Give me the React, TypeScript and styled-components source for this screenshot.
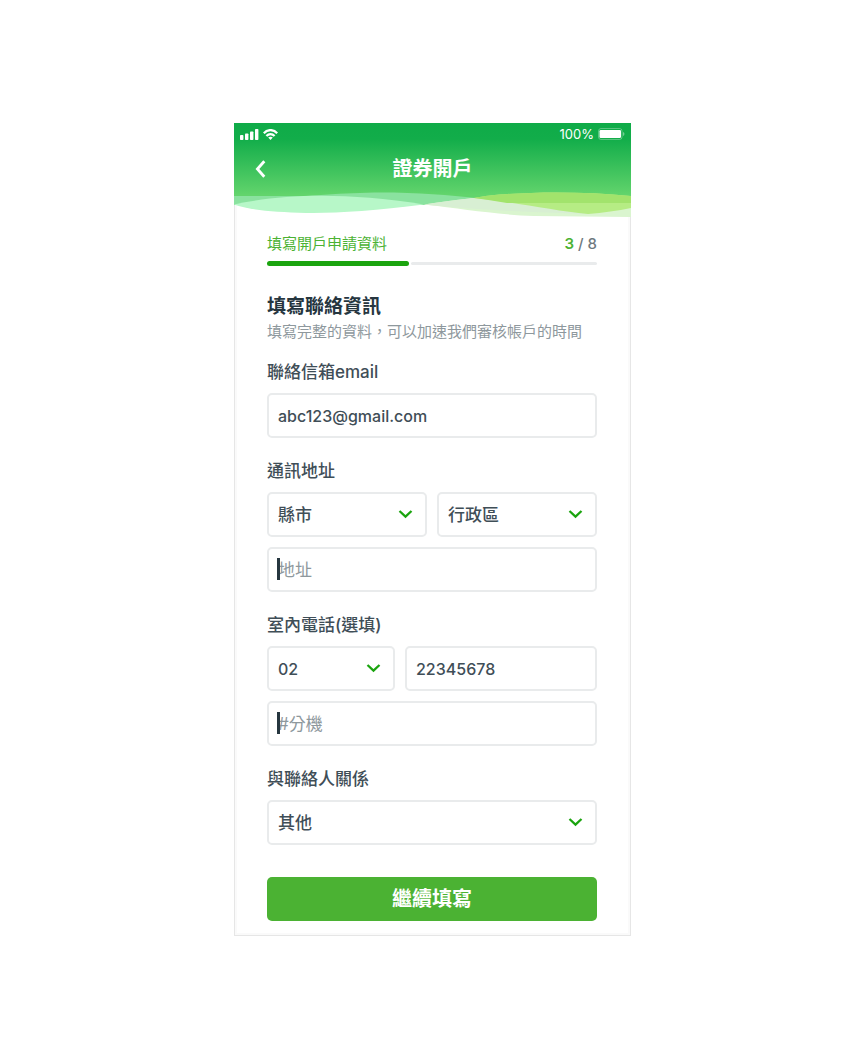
import React, { useId } from "react";
import styled, { createGlobalStyle } from "styled-components";

const color = {
  ink: "#3f4e57",
  inkDark: "#26363f",
  muted: "#8e989d",
  line: "#e9ebec",
  green: "#4bb233",
  greenDeep: "#1ba40f",
};

const GlobalStyle = createGlobalStyle`
  *, *::before, *::after { box-sizing: border-box; }
  body {
    margin: 0;
    background: #fff;
    color: ${color.ink};
    font-family: Inter, "Noto Sans CJK TC", sans-serif;
  }
`;

const Page = styled.div`
  display: flex;
  justify-content: center;
  padding: 123px 0 124px;
`;

const Phone = styled.div`
  width: 100%;
  max-width: 397px;
  background: #fff;
  box-shadow: inset 0 0 0 1px #e6e6e6, inset 0 0 0 3px #fafafa;
`;

const Header = styled.header`
  background: linear-gradient(#0fab48 0, #12ad4a 16px, #62d46c 72px, transparent 72px);
  color: #fff;
`;

const StatusBar = styled.div`
  display: flex;
  align-items: center;
  justify-content: space-between;
  height: 22px;
  padding: 0 6px;
`;

const StatusGroup = styled.div`
  display: flex;
  align-items: center;
  gap: 4px;
  font-size: 13px;
  line-height: 16px;
`;

const NavBar = styled.div`
  display: grid;
  grid-template-columns: 52px 1fr 52px;
  align-items: center;
  height: 47px;
`;

const BackButton = styled.button`
  display: flex;
  justify-content: center;
  padding: 0;
  border: 0;
  background: none;
  color: inherit;
  cursor: pointer;
`;

const Title = styled.h1`
  margin: 0;
  font-size: 20px;
  line-height: 28px;
  font-weight: 700;
  text-align: center;
`;

const Waves = styled.svg`
  display: block;
  width: 100%;
  height: 28px;
`;

const Content = styled.main`
  padding: 13px 34px 15px 33px;
`;

const StepRow = styled.div`
  display: flex;
  align-items: center;
  justify-content: space-between;
  font-size: 15px;
  line-height: 22px;
  color: ${color.green};
`;

const StepCount = styled.span`
  font-weight: 500;
  color: #6d787e;

  strong {
    font-weight: 600;
    color: ${color.green};
  }
`;

const Track = styled.div`
  display: flex;
  align-items: center;
  gap: 2px;
  margin-top: 6px;

  &::after {
    content: "";
    flex: 1;
    height: 3px;
    border-radius: 2px;
    background: ${color.line};
  }
`;

const Progress = styled.div`
  width: 43%;
  height: 5px;
  border-radius: 3px;
  background: ${color.greenDeep};
`;

const Heading = styled.h2`
  margin: 28px 0 0;
  font-size: 19px;
  line-height: 26px;
  font-weight: 700;
  color: ${color.inkDark};
`;

const Hint = styled.p`
  margin: 0;
  font-size: 15px;
  line-height: 24px;
  white-space: nowrap;
  color: ${color.muted};
`;

const Form = styled.form`
  display: grid;
  gap: 20px;
  margin-top: 15px;
`;

const Field = styled.fieldset`
  display: grid;
  gap: 10px;
  min-width: 0;
  margin: 0;
  padding: 0;
  border: 0;
`;

const Label = styled.label`
  padding-top: 2px;
  font-size: 17px;
  line-height: 22px;
  font-weight: 500;
`;

const Columns = styled.div<{ $template: string }>`
  display: grid;
  grid-template-columns: ${(p) => p.$template};
  gap: 10px;
`;

const Control = styled.div`
  position: relative;
  display: grid;
`;

const controlStyle = `
  width: 100%;
  height: 45px;
  padding: 0 9px;
  border: 2px solid ${color.line};
  border-radius: 5px;
  outline: 0;
  background: #fff;
  color: ${color.ink};
  font-family: inherit;
  font-weight: 500;
`;

const TextInput = styled.input`
  ${controlStyle}
  font-size: 16px;

  &::placeholder {
    color: ${color.muted};
    font-size: 17px;
    font-weight: 400;
    opacity: 1;
  }
`;

const Select = styled.select<{ $numeric?: boolean }>`
  ${controlStyle}
  font-size: ${(p) => (p.$numeric ? 16 : 17)}px;
  appearance: none;
`;

const Caret = styled.span`
  position: absolute;
  top: 11px;
  left: 10px;
  width: 3px;
  height: 22px;
  background: ${color.inkDark};
`;

const Chevron = styled.svg`
  position: absolute;
  top: 17px;
  right: 14px;
  width: 15px;
  height: 10px;
  pointer-events: none;
`;

const SubmitButton = styled.button`
  height: 44px;
  margin-top: 12px;
  padding: 0 0 3px;
  border: 0;
  border-radius: 5px;
  background: ${color.green};
  color: #fff;
  font-family: inherit;
  font-size: 20px;
  font-weight: 700;
  cursor: pointer;
`;

type DropdownProps = { id?: string; label?: string; numeric?: boolean; options: string[] };

function Dropdown({ id, label, numeric, options }: DropdownProps) {
  return (
    <Control>
      <Select id={id} aria-label={label} $numeric={numeric}>
        {options.map((o) => (
          <option key={o}>{o}</option>
        ))}
      </Select>
      <Chevron viewBox="0 0 15 10" aria-hidden="true">
        <path d="M1.5 2 L7.5 7.6 L13.5 2" fill="none" stroke={color.greenDeep} strokeWidth="2.3" />
      </Chevron>
    </Control>
  );
}

function SignalIcon() {
  return (
    <svg width="19" height="11" viewBox="0 0 19 11" fill="#fff" aria-hidden="true">
      <rect x="0" y="6" width="3.4" height="5" rx="0.8" />
      <rect x="5" y="4.5" width="3.4" height="6.5" rx="0.8" />
      <rect x="10" y="2.5" width="3.4" height="8.5" rx="0.8" />
      <rect x="15" y="0" width="3.4" height="11" rx="0.8" />
    </svg>
  );
}

function WifiIcon() {
  return (
    <svg width="15" height="11" viewBox="0 0 15 11" aria-hidden="true">
      <g fill="none" stroke="#fff" strokeWidth="2.2">
        <path d="M0.8 4.2 C4.5 0 10.5 0 14.2 4.2" />
        <path d="M3.4 7 C5.8 4.4 9.2 4.4 11.6 7" />
      </g>
      <path d="M7.5 11 L5.2 8.6 C6.5 7.4 8.5 7.4 9.8 8.6 Z" fill="#fff" />
    </svg>
  );
}

function BatteryIcon() {
  return (
    <svg width="27" height="12" viewBox="0 0 27 12" aria-hidden="true">
      <rect x="0.5" y="0.5" width="23.5" height="11" rx="2.5" fill="none" stroke="#fff" strokeOpacity="0.3" />
      <rect x="1.5" y="2" width="21.5" height="8" rx="1.2" fill="#fff" />
      <path d="M25.2 4 C26.8 4.6 26.8 7.4 25.2 8 Z" fill="#fff" fillOpacity="0.5" />
    </svg>
  );
}

function HeaderWaves() {
  return (
    <Waves viewBox="0 0 397 28" preserveAspectRatio="none" aria-hidden="true">
      <path d="M0 2 H397 V6 H0 Z" fill="#62d46c" />
      <path d="M0 4 H72 Q105 1.5 140 0.6 C180 0.3 215 3 242 6 L190 13 L0 13 Z" fill="#8ae29f" />
      <path d="M0 12.5 C50 2 110 0 190 12.6 C140 19 100 21.5 72 21 C40 20 15 18 0 12.5 Z" fill="#b7f7c8" />
      <path d="M190 12.6 Q218 8 240 6 H397 V25 Q345 24.5 300 24 C255 22 230 17 190 12.6 Z" fill="#daf5cf" />
      <path d="M190 12.6 Q218 8 240 6 H300 L354 22 Q250 19 190 12.6 Z" fill="#d8efd3" />
      <path d="M240 6 C270 0 340 -2 397 4 V16 Q377 20 354 22 C320 19 280 10 240 6 Z" fill="#b6ec84" />
      <path d="M240 6 C270 0 340 -2 397 4 V11 H273 Q256 8 240 6 Z" fill="#a2e36c" />
    </Waves>
  );
}

export default function App() {
  const uid = useId();
  const id = (name: string) => uid + name;

  return (
    <>
      <GlobalStyle />
      <Page>
        <Phone>
          <Header>
            <StatusBar>
              <StatusGroup>
                <SignalIcon />
                <WifiIcon />
              </StatusGroup>
              <StatusGroup>
                100%
                <BatteryIcon />
              </StatusGroup>
            </StatusBar>
            <NavBar>
              <BackButton type="button" aria-label="返回">
                <svg width="11" height="18" viewBox="0 0 11 18" aria-hidden="true">
                  <path d="M9.3 1.2 L2.4 9 L9.3 16.8" fill="none" stroke="#fff" strokeWidth="2.8" />
                </svg>
              </BackButton>
              <Title>證券開戶</Title>
            </NavBar>
            <HeaderWaves />
          </Header>

          <Content>
            <StepRow>
              <span>填寫開戶申請資料</span>
              <StepCount>
                <strong>3</strong> / 8
              </StepCount>
            </StepRow>
            <Track>
              <Progress />
            </Track>

            <Heading>填寫聯絡資訊</Heading>
            <Hint>填寫完整的資料，可以加速我們審核帳戶的時間</Hint>

            <Form onSubmit={(e) => e.preventDefault()}>
              <Field>
                <Label htmlFor={id("email")}>聯絡信箱email</Label>
                <TextInput id={id("email")} type="email" defaultValue="abc123@gmail.com" />
              </Field>

              <Field>
                <Label htmlFor={id("city")}>通訊地址</Label>
                <Columns $template="1fr 1fr">
                  <Dropdown id={id("city")} options={["縣市"]} />
                  <Dropdown label="行政區" options={["行政區"]} />
                </Columns>
                <Control>
                  <TextInput placeholder="地址" aria-label="地址" />
                  <Caret />
                </Control>
              </Field>

              <Field>
                <Label htmlFor={id("phone")}>室內電話(選填)</Label>
                <Columns $template="2fr 3fr">
                  <Dropdown label="區碼" numeric options={["02"]} />
                  <TextInput id={id("phone")} type="tel" defaultValue="22345678" />
                </Columns>
                <Control>
                  <TextInput placeholder="#分機" aria-label="分機" />
                  <Caret />
                </Control>
              </Field>

              <Field>
                <Label htmlFor={id("relation")}>與聯絡人關係</Label>
                <Dropdown id={id("relation")} options={["其他"]} />
              </Field>

              <SubmitButton type="submit">繼續填寫</SubmitButton>
            </Form>
          </Content>
        </Phone>
      </Page>
    </>
  );
}
